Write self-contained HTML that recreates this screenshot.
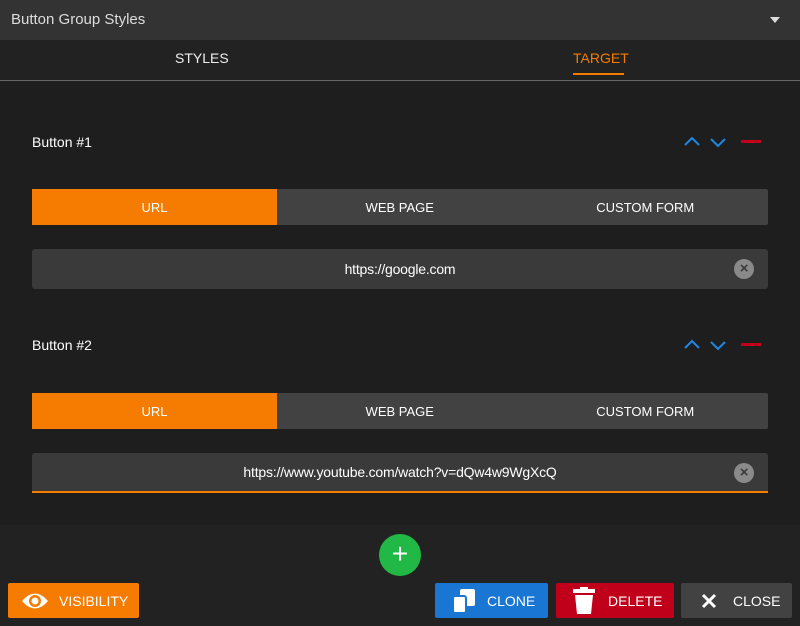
<!DOCTYPE html>
<html><head><style>
*{margin:0;padding:0;box-sizing:border-box}
body{width:800px;height:626px;background:#222;font-family:"Liberation Sans",sans-serif;color:#eee;position:relative;overflow:hidden;font-size:14px}
.abs{position:absolute}
.hdr{left:0;top:0;width:800px;height:40px;background:#333}
.seg{position:absolute;left:32px;width:736px;height:36px;background:#424242;border-radius:2px;display:flex;font-size:13px;color:#fff}
.seg div{flex:1;display:flex;align-items:center;justify-content:center}
.seg .on{background:#f57c00;flex:0 0 245px}
.inp{position:absolute;left:32px;width:736px;height:40px;background:#3a3a3a;border-radius:3px;display:flex;align-items:center;justify-content:center;font-size:14px;color:#fff;letter-spacing:-0.2px}
.x{position:absolute;right:14px;top:10px;width:20px;height:20px;border-radius:50%;background:#8a8a8a;color:#3a3a3a;font-size:15px;font-weight:bold;text-align:center;line-height:20px}
.lbl{position:absolute;left:32px;font-size:14px;color:#fff}
.btn{position:absolute;top:583px;height:35px;border-radius:2px;display:flex;align-items:center;color:#fff;font-size:14px}
</style></head><body>
<div class="abs hdr"></div>
<div class="abs" style="left:11px;top:11px;font-size:15px;color:#ddd">Button Group Styles</div>
<div class="abs" style="left:770px;top:17px;width:0;height:0;border-left:5px solid transparent;border-right:5px solid transparent;border-top:6px solid #ddd"></div>
<div class="abs" style="left:175px;top:50px;font-size:14px;color:#eee">STYLES</div>
<div class="abs" style="left:573px;top:50px;font-size:14px;color:#f57c00">TARGET</div>
<div class="abs" style="left:573px;top:73px;width:51px;height:2px;background:#f57c00"></div>
<div class="abs" style="left:0;top:80px;width:800px;height:1px;background:#666"></div>
<div class="abs" style="left:0;top:81px;width:800px;height:444px;background:#1e1e1e"></div>

<div class="lbl" style="top:134px">Button #1</div>
<svg class="abs" style="left:684px;top:134px" width="80" height="14"><path d="M1 11 L8 4 L15 11" stroke="#1e88e5" stroke-width="2" fill="none"/><path d="M27 5 L34 12 L41 5" stroke="#1e88e5" stroke-width="2" fill="none"/><rect x="57" y="6" width="20" height="3" fill="#c0001a"/></svg>
<div class="seg" style="top:189px"><div class="on">URL</div><div>WEB PAGE</div><div>CUSTOM FORM</div></div>
<div class="inp" style="top:249px">https://google.com<span class="x">×</span></div>

<div class="lbl" style="top:337px">Button #2</div>
<svg class="abs" style="left:684px;top:337px" width="80" height="14"><path d="M1 11 L8 4 L15 11" stroke="#1e88e5" stroke-width="2" fill="none"/><path d="M27 5 L34 12 L41 5" stroke="#1e88e5" stroke-width="2" fill="none"/><rect x="57" y="6" width="20" height="3" fill="#c0001a"/></svg>
<div class="seg" style="top:393px"><div class="on">URL</div><div>WEB PAGE</div><div>CUSTOM FORM</div></div>
<div class="inp" style="top:453px;border-bottom:2px solid #f57c00;border-radius:3px 3px 0 0">https://www.youtube.com/watch?v=dQw4w9WgXcQ<span class="x">×</span></div>

<div class="abs" style="left:379px;top:534px;width:42px;height:42px;border-radius:50%;background:#22b845;color:#fff;font-size:28px;text-align:center;line-height:40px">+</div>

<div class="btn" style="left:8px;width:131px;background:#f57c00">
<svg style="margin-left:13px" width="28" height="22" viewBox="0 0 28 22"><path d="M1 11 Q14 -4 27 11 Q14 26 1 11Z" fill="#fff"/><circle cx="14" cy="11" r="6" fill="#f57c00"/><circle cx="14" cy="11" r="3.5" fill="#fff"/></svg>
<span style="margin-left:10px">VISIBILITY</span></div>
<div class="btn" style="left:435px;width:113px;background:#1976d2">
<svg style="margin-left:16px" width="26" height="26" viewBox="0 0 26 26"><rect x="9" y="1" width="15" height="17" rx="2" fill="#fff"/><rect x="2" y="8" width="13" height="17" rx="2" fill="#fff" stroke="#1976d2" stroke-width="2"/></svg>
<span style="margin-left:10px">CLONE</span></div>
<div class="btn" style="left:556px;width:118px;background:#c0001a">
<svg style="margin-left:16px" width="24" height="28" viewBox="0 0 24 28"><rect x="1" y="2" width="22" height="4" fill="#fff"/><rect x="8" y="0" width="8" height="3" fill="#fff"/><path d="M3 8 H21 L19 27 H5Z" fill="#fff"/></svg>
<span style="margin-left:12px">DELETE</span></div>
<div class="btn" style="left:681px;width:111px;background:#424242">
<svg style="margin-left:20px" width="16" height="16"><path d="M2 2 L14 14 M14 2 L2 14" stroke="#fff" stroke-width="3"/></svg>
<span style="margin-left:16px">CLOSE</span></div>
</body></html>
